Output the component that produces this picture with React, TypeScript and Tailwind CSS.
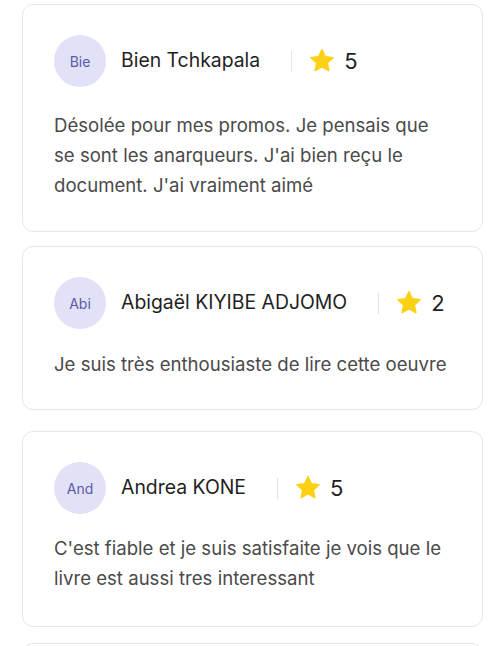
const reviews = [
  {
    initials: "Bie",
    name: "Bien Tchkapala",
    rating: 5,
    text: "Désolée pour mes promos. Je pensais que se sont les anarqueurs. J'ai bien reçu le document. J'ai vraiment aimé",
    card: "mt-1 pb-[31px]",
    body: "mt-[23px]",
  },
  {
    initials: "Abi",
    name: "Abigaël KIYIBE ADJOMO",
    rating: 2,
    text: "Je suis très enthousiaste de lire cette oeuvre",
    card: "mt-[14px] pb-[30px]",
    body: "mt-[20px]",
  },
  {
    initials: "And",
    name: "Andrea KONE",
    rating: 5,
    text: "C'est fiable et je suis satisfaite je vois que le livre est aussi tres interessant",
    card: "mt-[21px] pb-[33px]",
    body: "mt-[19px]",
  },
];

function Star() {
  return (
    <svg width="28" height="28" viewBox="0 0 24 24" aria-hidden="true">
      <path
        d="M12 2.2l2.9 6.1 6.6.8-4.9 4.6 1.3 6.6L12 17l-5.9 3.3 1.3-6.6-4.9-4.6 6.6-.8z"
        fill="#fcd015"
        stroke="#fcd015"
        strokeWidth="1.2"
        strokeLinejoin="round"
      />
    </svg>
  );
}

function ReviewCard({ review }: { review: (typeof reviews)[number] }) {
  return (
    <div className={`${review.card} rounded-[11px] border border-[#e6e6e6] bg-white px-[31px] pt-[30px]`}>
      <div className="flex items-center">
        <div className="flex h-[52px] w-[52px] shrink-0 items-center justify-center rounded-full bg-[#e1e1f8] text-[14px] text-[#5b5ba6]">
          {review.initials}
        </div>
        <span className="ml-[15px] text-[19.4px] text-[#1f1f1f]">{review.name}</span>
        <span className="ml-[31px] h-[21px] w-px bg-[#e2e2e2]" />
        <span className="ml-[16px] flex items-center">
          <Star />
        </span>
        <span className="ml-[8px] text-[22px] text-[#1f1f1f]">{review.rating}</span>
      </div>
      <p className={`${review.body} text-[18.6px] leading-[30px] text-[#4a4a4a]`}>{review.text}</p>
    </div>
  );
}

export default function App() {
  return (
    <div
      className="flex min-h-[646px] flex-col bg-white pl-[22px] pr-[15px]"
      style={{ fontFamily: "Inter, 'Liberation Sans', sans-serif" }}
    >
      {reviews.map((r) => (
        <ReviewCard key={r.initials} review={r} />
      ))}
      <div className="mt-4 h-[40px] rounded-t-[11px] border border-[#e6e6e6]" />
    </div>
  );
}
